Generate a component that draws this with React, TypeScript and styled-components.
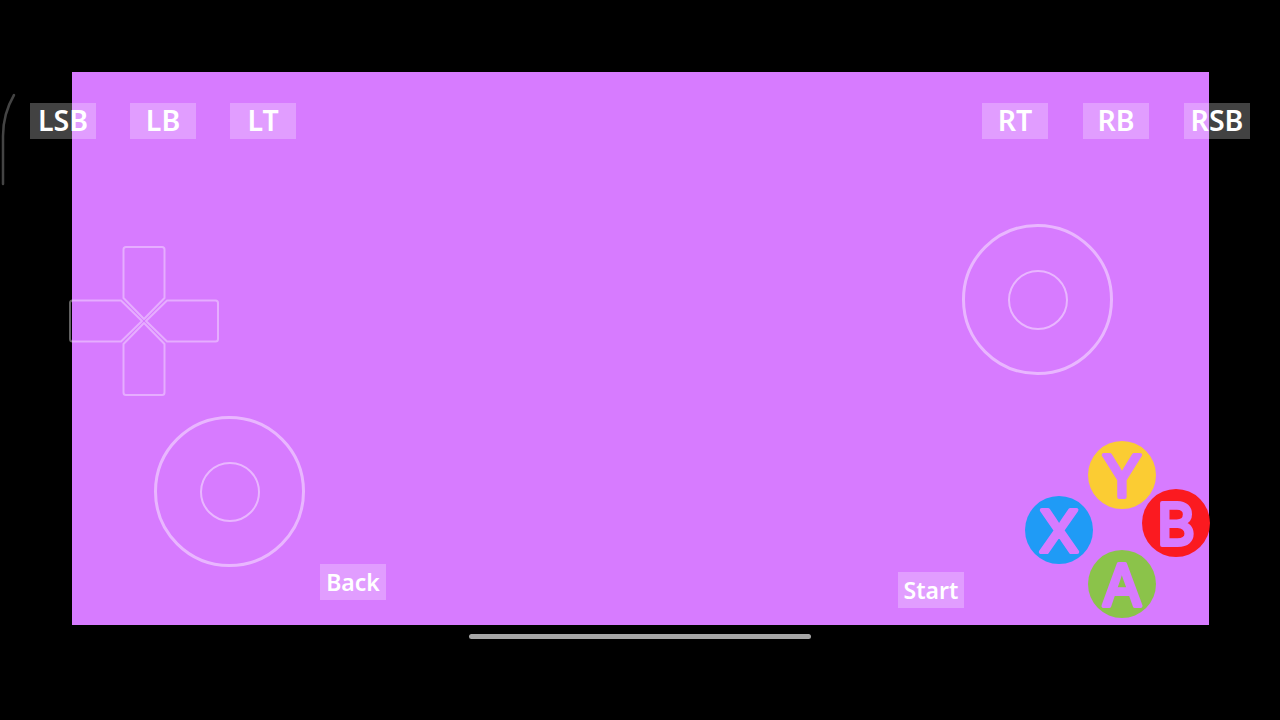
import React from 'react'
import styled, { createGlobalStyle } from 'styled-components'

const GlobalStyle = createGlobalStyle`
  html, body {
    margin: 0;
    padding: 0;
    background: #000;
  }
`

const Stage = styled.div`
  position: relative;
  width: 1280px;
  height: 720px;
  overflow: hidden;
  background: #000;
  display: flex;
  flex-direction: column;
  align-items: center;
  padding-top: 72px;
  box-sizing: border-box;
  font-family: 'Noto Sans', 'Open Sans', sans-serif;
`

const Screen = styled.div`
  align-self: flex-start;
  margin-left: 72px;
  width: 1136.5px;
  height: 553px;
  background: #d77bff;
`

const HomeBar = styled.div`
  width: 342px;
  height: 5px;
  margin-top: 9px;
  border-radius: 3px;
  background: #a6a6a6;
`

const EdgeMark = styled.svg`
  position: absolute;
  left: 0;
  top: 92px;
`

const Shoulders = styled.div`
  position: absolute;
  left: 30px;
  right: 30px;
  top: 103px;
  display: flex;
  justify-content: space-between;
`

const ShoulderGroup = styled.div<{ $gap: number }>`
  display: flex;
  gap: ${(p) => p.$gap}px;
`

const PadButton = styled.div`
  width: 66px;
  height: 36px;
  display: flex;
  align-items: center;
  justify-content: center;
  background: rgba(255, 255, 255, 0.26);
  color: #fff;
  font-size: 28.5px;
  font-weight: 600;
  line-height: 34px;
  padding-bottom: 2px;
  box-sizing: border-box;
`

const MenuButton = styled(PadButton)<{ $x: number; $y: number }>`
  position: absolute;
  left: ${(p) => p.$x}px;
  top: ${(p) => p.$y}px;
  font-size: 23px;
  font-weight: 600;
  padding-bottom: 0;
`

const Stick = styled.div<{ $x: number; $y: number }>`
  position: absolute;
  left: ${(p) => p.$x}px;
  top: ${(p) => p.$y}px;
  width: 151px;
  height: 151px;
  box-sizing: border-box;
  display: flex;
  align-items: center;
  justify-content: center;
  border: 3.5px solid rgba(255, 255, 255, 0.45);
  border-radius: 50%;
`

const StickKnob = styled.div`
  width: 60px;
  height: 60px;
  box-sizing: border-box;
  border: 2px solid rgba(255, 255, 255, 0.45);
  border-radius: 50%;
`

const DPad = styled.svg`
  position: absolute;
  left: 63.5px;
  top: 241px;
`

const DPadArm = styled.path`
  fill: none;
  stroke: rgba(255, 255, 255, 0.38);
  stroke-width: 2;
  stroke-linejoin: round;
`

const FaceButton = styled.svg<{ $x: number; $y: number; $color: string }>`
  position: absolute;
  left: ${(p) => p.$x}px;
  top: ${(p) => p.$y}px;
  width: 68px;
  height: 68px;
  border-radius: 50%;
  overflow: visible;
  background: ${(p) => p.$color};
`

const FaceLetter = styled.text`
  font-family: 'Inter', 'Noto Sans', sans-serif;
  font-size: 58px;
  font-weight: 400;
  text-anchor: middle;
  fill: #d77bff;
  stroke: #d77bff;
  stroke-width: 4px;
  stroke-linejoin: round;
`

const armUp = 'M-18 -74 H18 Q20.5 -74 20.5 -71.5 V-23 L0 -2 L-20.5 -23 V-71.5 Q-20.5 -74 -18 -74 Z'
const faces = [
  { label: 'Y', x: 1088, y: 441, color: '#fbcc33' },
  { label: 'B', x: 1142, y: 489, color: '#fb1a20' },
  { label: 'X', x: 1025, y: 496, color: '#1f9bf6' },
  { label: 'A', x: 1088, y: 550, color: '#8bc34a' },
]

export default function App() {
  return (
    <Stage>
      <GlobalStyle />
      <Screen />
      <HomeBar />

      <EdgeMark width="20" height="96" viewBox="0 0 20 96">
        <path d="M14 3 C7 15 3 28 3 44 V92" fill="none" stroke="#444" strokeWidth="2.5" strokeLinecap="round" />
      </EdgeMark>

      <Shoulders>
        <ShoulderGroup $gap={34}>
          <PadButton>LSB</PadButton>
          <PadButton>LB</PadButton>
          <PadButton>LT</PadButton>
        </ShoulderGroup>
        <ShoulderGroup $gap={35}>
          <PadButton>RT</PadButton>
          <PadButton>RB</PadButton>
          <PadButton>RSB</PadButton>
        </ShoulderGroup>
      </Shoulders>

      <DPad width="160" height="160" viewBox="-80 -80 160 160">
        {[0, 90, 180, 270].map((deg) => (
          <DPadArm key={deg} d={armUp} transform={`rotate(${deg})`} />
        ))}
      </DPad>

      <Stick $x={154} $y={416}>
        <StickKnob />
      </Stick>
      <Stick $x={962} $y={224}>
        <StickKnob />
      </Stick>

      <MenuButton $x={320} $y={564}>Back</MenuButton>
      <MenuButton $x={898} $y={572}>Start</MenuButton>

      {faces.map((f) => (
        <FaceButton key={f.label} $x={f.x} $y={f.y} $color={f.color} viewBox="0 0 68 68">
          <FaceLetter x="34" y="55.5">{f.label}</FaceLetter>
        </FaceButton>
      ))}
    </Stage>
  )
}
